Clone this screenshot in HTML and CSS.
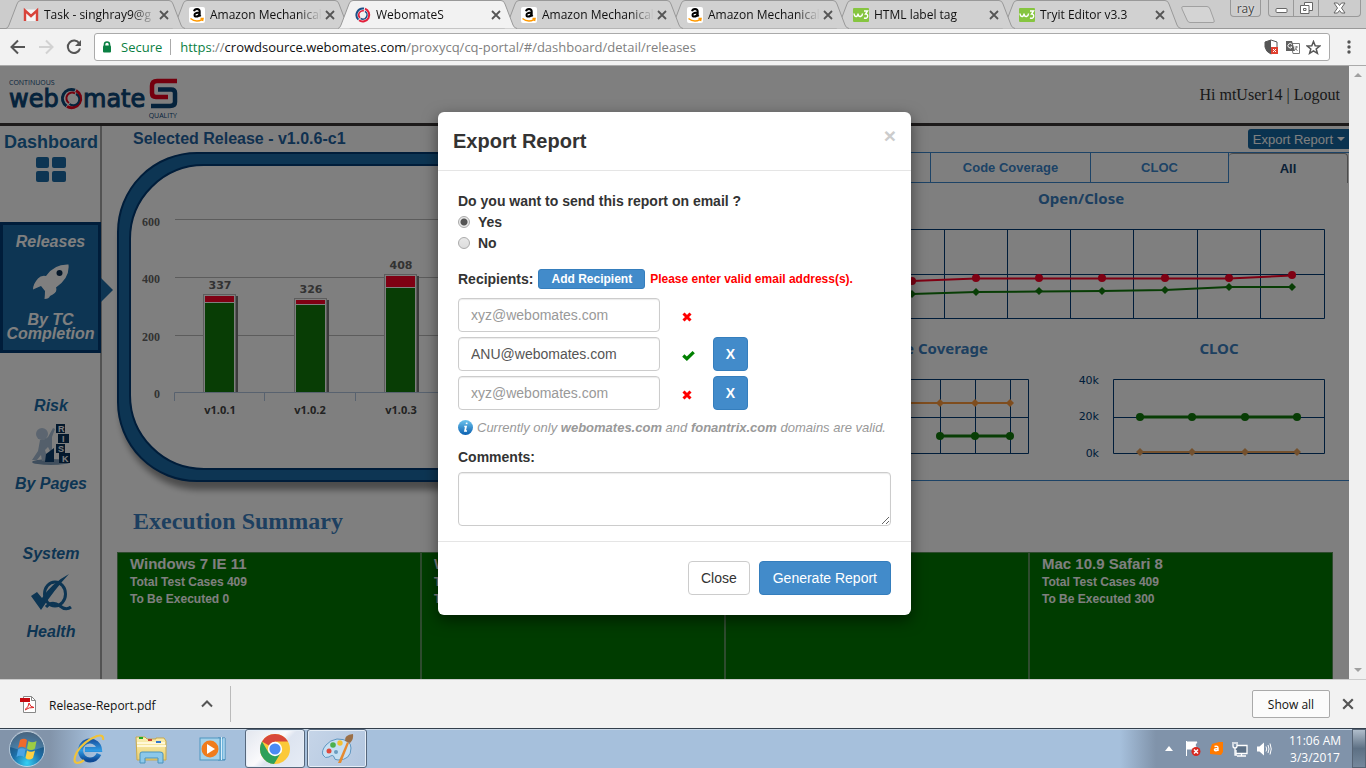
FILE: index.html
```html
<!DOCTYPE html>
<html lang="en">
<head>
<meta charset="utf-8">
<title>WebomateS</title>
<link rel="stylesheet" href="styles.css">
</head>
<body>
<svg class="defs" aria-hidden="true">
  <defs>
    <linearGradient id="gInfo" x1="0" y1="0" x2="0" y2="1"><stop offset="0" stop-color="#6cc4ee"/><stop offset="1" stop-color="#0a5fb0"/></linearGradient>
    <radialGradient id="gOrb" cx=".5" cy=".9" r=".9"><stop offset="0" stop-color="#35d0f5"/><stop offset=".45" stop-color="#1d6fa8"/><stop offset="1" stop-color="#20405f"/></radialGradient>
    <linearGradient id="gIe" x1="0" y1="0" x2="0" y2="1"><stop offset="0" stop-color="#1c5ba8"/><stop offset=".5" stop-color="#2f9be4"/><stop offset="1" stop-color="#0e4a96"/></linearGradient>
    <linearGradient id="gFolder" x1="0" y1="0" x2="0" y2="1"><stop offset="0" stop-color="#fbf0b4"/><stop offset="1" stop-color="#e9cf70"/></linearGradient>
    <symbol id="tabShape" viewBox="0 0 179 29" preserveAspectRatio="none"><path d="M0 28.500 Q2 28 3 25 L11 4 Q12 .5 15 .5 H163 Q166 .5 167 4 L175 25 Q176 28 179 28.500" stroke-width="1"/></symbol>
    <symbol id="x" viewBox="0 0 10 10"><path d="M1 1L9 9M9 1L1 9" stroke="#555" stroke-width="1.800" fill="none"/></symbol>
    <symbol id="amazon" viewBox="0 0 16 16"><rect width="16" height="16" rx="2" fill="#fff"/><path d="M5 4.300Q5.500 2 8 2Q10.700 2 10.700 4.500V8.200L11.500 9.500M10.600 5.500Q5.500 5.500 5.500 8Q5.500 9.600 7.300 9.600Q9.500 9.600 10.600 7" fill="none" stroke="#000" stroke-width="2"/><path d="M1.500 11.500Q7 16 13 12.600M11.500 11.600L14 11.500L13.500 14" fill="none" stroke="#f90" stroke-width="1.500"/></symbol>
    <symbol id="w3" viewBox="0 0 16 14"><rect width="16" height="14" rx="1" fill="#86c540"/><path d="M1 5.500Q1.500 9 3.500 8.500Q5 8 5 5.500Q5.500 9 7.500 8.500Q9.500 8 9.500 5.500M11 3H14.500L12.500 6Q15 6 14.600 8.600Q14 11 11 10" fill="none" stroke="#fff" stroke-width="1.400"/></symbol>
    <symbol id="swirl" viewBox="0 0 16 16"><path d="M3.400 12.600A6.500 6.500 0 0 1 9 1.600" fill="none" stroke="#1c4f86" stroke-width="2"/><path d="M10 1.800A6.500 6.500 0 1 1 4 13.200" fill="none" stroke="#e2203c" stroke-width="2"/><path d="M5 11A4.200 4.200 0 0 1 9 3.900" fill="none" stroke="#e2203c" stroke-width="1.500"/><path d="M10 4.300A4.200 4.200 0 1 1 5.600 11.500" fill="none" stroke="#1c4f86" stroke-width="1.500"/></symbol>
    <symbol id="bad" viewBox="0 0 10 10"><path d="M1.500 1.500L8.500 8.500M8.500 1.500L1.500 8.500" stroke="red" stroke-width="3" fill="none"/></symbol>
    <symbol id="good" viewBox="0 0 12 10"><path d="M1.200 5L4.500 8L10.800 1.800" stroke="green" stroke-width="3" fill="none"/></symbol>
  </defs>
</svg>

<div class="tabstrip">
  <div class="tab t1"><svg class="shape"><use href="#tabShape"/></svg>
    <svg class="fav" viewBox="0 0 16 16"><path d="M1 2.500H15V14H1Z" fill="#f4f4f4"/><path d="M2 14V3.500L8 9L14 3.500V14" fill="none" stroke="#d8433a" stroke-width="2.400"/></svg>
    <span class="tab-title">Task - singhray9@g</span><button class="tab-x" aria-label="Close tab"><svg><use href="#x"/></svg></button></div>
  <div class="tab t2"><svg class="shape"><use href="#tabShape"/></svg><svg class="fav"><use href="#amazon"/></svg><span class="tab-title">Amazon Mechanical</span><button class="tab-x" aria-label="Close tab"><svg><use href="#x"/></svg></button></div>
  <div class="tab active"><svg class="shape"><use href="#tabShape"/></svg><svg class="fav"><use href="#swirl"/></svg><span class="tab-title">WebomateS</span><button class="tab-x" aria-label="Close tab"><svg><use href="#x"/></svg></button></div>
  <div class="tab t4"><svg class="shape"><use href="#tabShape"/></svg><svg class="fav"><use href="#amazon"/></svg><span class="tab-title">Amazon Mechanical</span><button class="tab-x" aria-label="Close tab"><svg><use href="#x"/></svg></button></div>
  <div class="tab t5"><svg class="shape"><use href="#tabShape"/></svg><svg class="fav"><use href="#amazon"/></svg><span class="tab-title">Amazon Mechanical</span><button class="tab-x" aria-label="Close tab"><svg><use href="#x"/></svg></button></div>
  <div class="tab t6"><svg class="shape"><use href="#tabShape"/></svg><svg class="fav"><use href="#w3"/></svg><span class="tab-title">HTML label tag</span><button class="tab-x" aria-label="Close tab"><svg><use href="#x"/></svg></button></div>
  <div class="tab t7"><svg class="shape"><use href="#tabShape"/></svg><svg class="fav"><use href="#w3"/></svg><span class="tab-title">Tryit Editor v3.3</span><button class="tab-x" aria-label="Close tab"><svg><use href="#x"/></svg></button></div>
  <button class="newtab" aria-label="New tab"><svg width="34" height="18" viewBox="0 0 34 18"><path d="M2 .5H26Q28 .5 29 3L33 14Q34 16.500 32 16.500H9Q7 16.500 6 14L1 3Q0 .5 2 .5Z" fill="#d4d4d4" stroke="#a0a0a0"/></svg></button>
  <div class="winctl">
    <button class="user">ray</button>
    <div class="wingroup">
      <button aria-label="Minimize"><svg width="13" height="14" viewBox="0 0 13 14"><rect x="1" y="7.500" width="11" height="4" rx="1" fill="#fff" stroke="#666"/></svg></button>
      <button aria-label="Restore"><svg width="13" height="14" viewBox="0 0 13 14"><path d="M4.500 1.500H12.500V9.500H9V12.500H.5V4.500H4.500Z" fill="#fff" stroke="#666"/><path d="M4.500 4.500H9V9.500M3.500 7.500H6V9.500H3.500Z" fill="none" stroke="#666"/></svg></button>
      <button class="wide" aria-label="Close"><svg width="13" height="12" viewBox="0 0 13 12"><path d="M1 1H4.500L6.500 3.500L8.500 1H12L8.500 6L12 11H8.500L6.500 8.500L4.500 11H1L4.500 6Z" fill="#fff" stroke="#666"/></svg></button>
    </div>
  </div>
</div>

<div class="toolbar">
  <button class="nav" aria-label="Back"><svg width="16" height="16" viewBox="0 0 16 16"><path d="M15 8H2M8 1.500L1.500 8L8 14.500" fill="none" stroke="#555" stroke-width="2"/></svg></button>
  <button class="nav" aria-label="Forward"><svg width="16" height="16" viewBox="0 0 16 16"><path d="M1 8H14M8 1.500L14.500 8L8 14.500" fill="none" stroke="#d2d2d2" stroke-width="2"/></svg></button>
  <button class="nav" aria-label="Reload"><svg width="16" height="16" viewBox="0 0 16 16"><path d="M13.300 4.500A6.200 6.200 0 1 0 14 9.500" fill="none" stroke="#555" stroke-width="2"/><path d="M15 1V7H9Z" fill="#555"/></svg></button>
  <div class="omnibox">
    <svg width="10" height="12" viewBox="0 0 10 12"><path d="M2.500 5V3.500A2.500 2.500 0 0 1 7.500 3.500V5" fill="none" stroke="#0b8043" stroke-width="1.600"/><rect x="1" y="4.500" width="8" height="7" rx="1" fill="#0b8043"/></svg>
    <span class="secure">Secure</span>
    <span class="url"><span class="scheme">https</span>://<b>crowdsource.webomates.com</b>/proxycq/cq-portal/#/dashboard/detail/releases</span>
    <span class="omni-icons">
      <svg width="15" height="16" viewBox="0 0 15 16"><path d="M7 1L13 3V8Q12 13 7 15Q2 13 1 8V3Z" fill="#fff" stroke="#555"/><path d="M7 1V15Q2 13 1 8V3Z" fill="#555"/><rect x="7" y="8" width="7" height="7" fill="#e0402f"/><path d="M9 10L12 13M12 10L9 13" stroke="#fff"/></svg>
      <svg width="15" height="15" viewBox="0 0 15 15"><path d="M6 3.500H14.500V13.500H8Z" fill="#fff" stroke="#777"/><path d="M1 1H7L10 11H1Z" fill="#606060"/><path d="M7 4.500A2.200 2.200 0 1 0 7 7H5.500" fill="none" stroke="#fff"/><path d="M9.500 7H13M11.500 6V7Q11 9 10 10M10.500 8L12.500 11" fill="none" stroke="#888"/></svg>
      <svg width="15" height="15" viewBox="0 0 15 15"><path d="M7.500 1.500L9.200 5.700L13.700 6L10.200 8.900L11.400 13.300L7.500 10.800L3.600 13.300L4.800 8.900L1.300 6L5.800 5.700Z" fill="none" stroke="#555" stroke-width="1.500"/></svg>
    </span>
  </div>
  <button class="menu" aria-label="Menu"><svg width="4" height="14" viewBox="0 0 4 14" fill="#555"><circle cx="2" cy="2" r="1.700"/><circle cx="2" cy="7" r="1.700"/><circle cx="2" cy="12" r="1.700"/></svg></button>
</div>

<div class="viewport">
<div class="page">
  <header class="site-head">
    <svg class="logo" width="172" height="46" viewBox="0 0 172 46">
      <text x="1" y="10" class="lg-small">CONTINUOUS</text>
      <text x="1" y="32" class="lg-word">web</text>
      <text x="75" y="32" class="lg-word">mate</text>
      <circle cx="65" cy="24" r="10" fill="#fff"/>
      <path d="M58.500 31A9 9 0 0 1 67 15.200" fill="none" stroke="#0b4678" stroke-width="3"/>
      <path d="M68 15.500A9 9 0 1 1 59 31.500" fill="none" stroke="#e8001c" stroke-width="3"/>
      <path d="M61 28A5.500 5.500 0 0 1 67 18.500" fill="none" stroke="#e8001c" stroke-width="2"/>
      <path d="M68 19A6 6 0 1 1 61.500 29" fill="none" stroke="#0b4678" stroke-width="2"/>
      <path d="M169 6H149Q144 6 144 11V18Q144 22 148 22H160" fill="none" stroke="#e8001c" stroke-width="4.500"/>
      <path d="M150 14.500H163Q167 14.500 167 18V27Q167 31 162 31H143" fill="none" stroke="#0b4678" stroke-width="4.500"/>
      <text x="169" y="43" text-anchor="end" class="lg-small">QUALITY</text>
    </svg>
    <div class="account"><span>Hi mtUser14</span> | <a href="#">Logout</a></div>
  </header>
  <div class="columns">
    <nav class="side">
      <a class="s-item s-dash" href="#">Dashboard
        <svg width="30" height="25" viewBox="0 0 30 25" fill="#1a6aa6"><rect width="13" height="11" rx="2"/><rect x="16" width="14" height="11" rx="2"/><rect y="14" width="13" height="11" rx="2"/><rect x="16" y="14" width="14" height="11" rx="2"/></svg></a>
      <a class="s-item s-rel" href="#"><span>Releases</span>
        <svg width="36" height="36" viewBox="0 0 36 36"><path d="M35.500 .5Q37 14 23 23.500Q25 29 17 32Q16 35 11.500 35Q12 30 12 27L8 22Q5 23 0 25.500Q0 20 5 14.500Q8 11 13 12Q21 0 35.500 .5Z" fill="#fff"/><circle cx="26.500" cy="9" r="3" fill="#0a2f52"/></svg>
        <span class="tight">By TC Completion</span></a>
      <a class="s-item s-risk" href="#"><span>Risk</span>
        <svg width="40" height="44" viewBox="0 0 40 44"><ellipse cx="20" cy="39" rx="19" ry="3" fill="#7f9dba"/><circle cx="11" cy="11" r="6" fill="#b8cbe0"/><path d="M9 17Q14 17 17 14L22 5L24 6L21 14V32L17 24L14 27L17 37L11 38L10 32L6 37H1L7 28Z" fill="#a9bfd6"/><path d="M15 31L23 25V39H14Z" fill="#0b3c6c"/><rect x="25" y="1" width="9" height="9" fill="#083058"/><rect x="27" y="11" width="11" height="9" fill="#083058"/><rect x="25" y="21" width="9" height="9" fill="#083058"/><rect x="28" y="30" width="11" height="10" fill="#083058"/><g class="blk"><text x="27" y="9">R</text><text x="31" y="19">I</text><text x="27" y="29">S</text><text x="31" y="39">K</text></g></svg>
        <span>By Pages</span></a>
      <a class="s-item s-sys" href="#"><span>System</span>
        <svg width="42" height="38" viewBox="0 0 42 38"><path d="M39 0Q24 16 11 36L1 22L7 18L12 24Q22 9 39 0Z" fill="#1a6aa6"/><ellipse cx="25" cy="20" rx="10.500" ry="12" fill="none" stroke="#1a6aa6" stroke-width="3"/><path d="M16 33Q22 26 30 32Q36 37 41 33" fill="none" stroke="#1a6aa6" stroke-width="3"/></svg>
        <span>Health</span></a>
    </nav>
    <main>
      <div class="release-bar"><h2>Selected Release - v1.0.6-c1</h2><button class="export">Export Report<i class="caret"></i></button></div>
      <div class="panels">
        <section class="frame"><div class="frame-in">
          <svg class="chart" width="300" height="290">
            <g stroke="#b8b8b8"><path d="M44 53.500H600M44 111.500H600M44 169.500H600"/></g>
            <g class="ylab"><text x="29" y="60">600</text><text x="29" y="117">400</text><text x="29" y="175">200</text><text x="29" y="232">0</text></g>
            <g fill="#777"><rect x="104" y="130" width="3" height="96"/><rect x="195" y="134" width="3" height="92"/><rect x="285" y="110" width="3" height="116"/></g>
            <g fill="#fff" stroke="#bbb"><rect x="72.500" y="128.500" width="32" height="98"/><rect x="163.500" y="132.500" width="32" height="94"/><rect x="253.500" y="108.500" width="32" height="118"/></g>
            <g fill="#ff0026"><rect x="74" y="130" width="29" height="6"/><rect x="165" y="134" width="29" height="4"/><rect x="255" y="110" width="29" height="11"/></g>
            <g fill="#107a0a"><rect x="74" y="137" width="29" height="89"/><rect x="165" y="139" width="29" height="87"/><rect x="255" y="122" width="29" height="104"/></g>
            <path d="M43.500 235V226.500H600M133.500 226V235M224.500 226V235" fill="none" stroke="#b0c4de"/>
            <g class="vlab"><text x="89" y="123">337</text><text x="180" y="127">326</text><text x="270" y="103">408</text></g>
            <g class="xlab"><text x="89" y="248">v1.0.1</text><text x="179" y="248">v1.0.2</text><text x="270" y="248">v1.0.3</text></g>
          </svg>
        </div></section>
        <section class="metrics">
          <div class="mtabs"><button class="grow">Defects</button><button class="cov">Code Coverage</button><button class="cloc">CLOC</button><button class="all">All</button></div>
          <svg class="chart" width="536" height="150">
            <text class="ctitle" x="268" y="21">Open/Close</text>
            <path d="M4.500 46.500H511.500V135.500H4.500ZM4 91.500H511M67.500 46V135M131.500 46V135M194.500 46V135M257.500 46V135M320.500 46V135M384.500 46V135M447.500 46V135" fill="none" stroke="#003a74"/>
            <path d="M36 100L99 98L163 95.500H416L479 92.500" fill="none" stroke="#ff0026" stroke-width="2"/>
            <g fill="#ff0026"><circle cx="99" cy="98" r="4"/><circle cx="163" cy="95" r="4"/><circle cx="226" cy="95" r="4"/><circle cx="289" cy="95" r="4"/><circle cx="352" cy="95" r="4"/><circle cx="416" cy="95" r="4"/><circle cx="479" cy="92" r="4"/></g>
            <path d="M36 112L99 111L163 109L226 108.500L289 108L352 107L416 104H479" fill="none" stroke="#107a0a" stroke-width="2"/>
            <path d="M99 107l4 4l-4 4l-4-4zM163 105l4 4l-4 4l-4-4zM226 104l4 4l-4 4l-4-4zM289 104l4 4l-4 4l-4-4zM352 103l4 4l-4 4l-4-4zM416 100l4 4l-4 4l-4-4zM479 100l4 4l-4 4l-4-4z" fill="#107a0a"/>
          </svg>
          <div class="pair">
            <svg class="chart" width="268" height="147">
              <text class="ctitle" x="175" y="21">Code Coverage</text>
              <path d="M20.500 46.500H215.500V120.500H20.500ZM20 84.500H215M127.500 46V120M162.500 46V120M197.500 46V120" fill="none" stroke="#003a74"/>
              <path d="M20 70H197" stroke="#ff9a3c" stroke-width="2"/><path d="M127 66l4 4l-4 4l-4-4zM162 66l4 4l-4 4l-4-4zM197 66l4 4l-4 4l-4-4z" fill="#ff9a3c"/>
              <path d="M127 103H197" stroke="#107a0a" stroke-width="3"/><g fill="#107a0a"><circle cx="127" cy="103" r="4"/><circle cx="162" cy="103" r="4"/><circle cx="197" cy="103" r="4"/></g>
            </svg>
            <svg class="chart" width="268" height="147">
              <text class="ctitle" x="138" y="21">CLOC</text>
              <g class="klab"><text x="18" y="51">40k</text><text x="18" y="87">20k</text><text x="18" y="124">0k</text></g>
              <path d="M32.500 46.500H243.500V120.500H32.500ZM32 84.500H243" fill="none" stroke="#003a74"/>
              <path d="M59 84H216" stroke="#107a0a" stroke-width="3"/><g fill="#107a0a"><circle cx="59" cy="84" r="4"/><circle cx="111" cy="84" r="4"/><circle cx="164" cy="84" r="4"/><circle cx="216" cy="84" r="4"/></g>
              <path d="M59 119H216" stroke="#e8a25c" stroke-width="2"/><path d="M59 115l4 4l-4 4l-4-4zM111 115l4 4l-4 4l-4-4zM164 115l4 4l-4 4l-4-4zM216 115l4 4l-4 4l-4-4z" fill="#e8a25c"/>
            </svg>
          </div>
        </section>
      </div>
      <h1>Execution Summary</h1>
      <div class="cards">
        <article><h3>Windows 7 IE 11</h3><p>Total Test Cases 409</p><p>To Be Executed 0</p></article>
        <article><h3>Windows 8</h3><p>Total Test Cases 409</p><p>To Be Executed</p></article>
        <article></article>
        <article><h3>Mac 10.9 Safari 8</h3><p>Total Test Cases 409</p><p>To Be Executed 300</p></article>
      </div>
    </main>
  </div>

  <div class="backdrop">
    <form class="modal" role="dialog" aria-labelledby="mt">
      <div class="m-head"><h4 id="mt">Export Report</h4><button type="button" class="m-x" aria-label="Dismiss">×</button></div>
      <div class="m-body">
        <div class="lbl">Do you want to send this report on email ?</div>
        <label class="radio"><input type="radio" name="mail" checked>Yes</label>
        <label class="radio"><input type="radio" name="mail">No</label>
        <div class="recips"><span class="lbl">Recipients:</span><button type="button" class="btn add">Add Recipient</button><span class="err">Please enter valid email address(s).</span></div>
        <div class="row"><input type="text" aria-label="Recipient 1" placeholder="xyz@webomates.com"><span class="st"><svg><use href="#bad"/></svg></span></div>
        <div class="row"><input type="text" aria-label="Recipient 2" value="ANU@webomates.com"><span class="st"><svg class="ok"><use href="#good"/></svg></span><button type="button" class="btn del">X</button></div>
        <div class="row"><input type="text" aria-label="Recipient 3" placeholder="xyz@webomates.com"><span class="st"><svg><use href="#bad"/></svg></span><button type="button" class="btn del">X</button></div>
        <div class="hint"><svg width="15" height="15" viewBox="0 0 15 15"><circle cx="7.500" cy="7.500" r="7.500" fill="url(#gInfo)"/><path d="M8.800 2.600L8.500 4.200M6.300 6.500H8L7 11H9" fill="none" stroke="#fff" stroke-width="1.700"/></svg><span>Currently only <b>webomates.com</b> and <b>fonantrix.com</b> domains are valid.</span></div>
        <label class="lbl" for="cm">Comments:</label>
        <textarea id="cm"></textarea>
      </div>
      <div class="m-foot"><button type="button" class="btn plain">Close</button><button type="button" class="btn gen">Generate Report</button></div>
    </form>
  </div>
</div>
<div class="scroll"><i class="up"></i><i class="down"></i></div>
</div>

<div class="shelf">
  <button class="dl">
    <svg width="16" height="17" viewBox="0 0 16 17"><path d="M3.500 .5H11.500L15.500 4.500V16.500H3.500Z" fill="#fff" stroke="#888"/><path d="M11.500 .5V4.500H15.500" fill="none" stroke="#888"/><rect y="2" width="10" height="4" fill="#c8090f"/><path d="M5 13.500Q9 11 9 7Q10 11 14 11.500Q9 11 5 14" fill="none" stroke="#d22"/></svg>
    <span class="dl-name">Release-Report.pdf</span>
    <svg class="chev" width="12" height="8" viewBox="0 0 12 8"><path d="M1 6.500L6 1.500L11 6.500" fill="none" stroke="#555" stroke-width="2"/></svg>
  </button>
  <button class="showall">Show all</button>
  <button class="shelf-x" aria-label="Close downloads bar"><svg><use href="#x"/></svg></button>
</div>

<div class="taskbar">
  <button class="start" aria-label="Start"><svg width="38" height="38" viewBox="0 0 38 38"><circle cx="19" cy="19" r="17.500" fill="url(#gOrb)" stroke="#dbe9f5" stroke-opacity=".7"/><path d="M2 17A17 17 0 0 1 36 17Q19 24 2 17Z" fill="#fff" opacity=".18"/><path d="M12 10Q16 7.500 19 10L17.500 18Q14 15.500 10 18Z" fill="#ee6a2c"/><path d="M20.500 11Q24 13.500 28.500 11L27 18.500Q23 21.500 19 18.500Z" fill="#9ccc44"/><path d="M10 19.500Q14 17 17.500 19.500L16 27Q12 24.500 8.500 27Z" fill="#4ba4e6"/><path d="M19 20.500Q23 23 27 20.500L25 28Q21 31 17.500 28Z" fill="#fcd042"/></svg></button>
  <button class="tk" aria-label="Internet Explorer"><svg width="34" height="32" viewBox="0 0 34 32"><path d="M27 21Q24 27 18 27A9.500 9.500 0 1 1 27.500 16.500H13" fill="none" stroke="url(#gIe)" stroke-width="5"/><path d="M31 7Q32 1 25 3Q12 8 5 19Q0 29 5 30Q9 30 12 27" fill="none" stroke="#f0c33a" stroke-width="2.200"/></svg></button>
  <button class="tk" aria-label="Explorer"><svg width="34" height="30" viewBox="0 0 34 30"><path d="M2 3H11L13 5H22V4H30L32 7V26H3Z" fill="url(#gFolder)" stroke="#c9a94c"/><path d="M3 9H31M3 12H32" stroke="#fff8d8" stroke-width="2"/><rect x="5" y="3" width="4" height="2" fill="#2a2"/><rect x="14" y="5" width="4" height="2" fill="#c43"/><rect x="22" y="7" width="5" height="2" fill="#37c"/><path d="M6 29V20Q6 18 8 18H26Q29 18 29 20V29H24V24H11V29Z" fill="#8cc8ea" stroke="#4a93bd"/></svg></button>
  <button class="tk" aria-label="Media Player"><svg width="34" height="28" viewBox="0 0 34 28"><path d="M22 3H29V25H22Z" fill="#70b4dc" stroke="#3d87b5"/><path d="M25.500 2V25M28 3V24" stroke="#d8effb"/><rect x="4" y="3" width="20" height="22" fill="#a5d2ea" stroke="#4f96bf"/><circle cx="14" cy="14" r="8.500" fill="#f07c1c"/><path d="M11 9L19 14L11 19Z" fill="#fff"/></svg></button>
  <button class="tk on lit" aria-label="Chrome"><svg width="32" height="32" viewBox="0 0 32 32"><circle cx="16" cy="16" r="15" fill="#fbc938"/><path d="M16 16L3 8.500A15 15 0 0 1 29 8.500H16Z" fill="#d8473a"/><path d="M3 8.500A15 15 0 0 0 15 31L22 19.500L9.500 19.500Z" fill="#2da05a"/><circle cx="16" cy="16" r="7.200" fill="#fff"/><circle cx="16" cy="16" r="5.600" fill="#4a8af4"/></svg></button>
  <button class="tk on" aria-label="Paint"><svg width="34" height="32" viewBox="0 0 34 32"><path d="M17 6Q31 6 31 15Q31 27 18 27Q14 27 14 24Q13 21 9 24Q5 26 3 22Q1 18 6 12Q10 7 17 6Z" fill="#c6e0f3" stroke="#5e96c0"/><circle cx="9" cy="18" r="2.500" fill="#e04a3c"/><circle cx="13" cy="12" r="2.800" fill="#4cb04c"/><circle cx="20" cy="10" r="2.700" fill="#f2c034"/><circle cx="16" cy="19" r="2" fill="#6b9cc0"/><path d="M18 30L27 9L29 10L21 30Z" fill="#e58a30"/><path d="M25 8Q24 2 33 1Q34 6 30 10Z" fill="#9b7048"/></svg></button>
  <div class="tray">
    <div class="tray-icons">
    <svg width="8" height="5" viewBox="0 0 8 5"><path d="M0 5L4 0L8 5Z" fill="#fff"/></svg>
    <svg width="16" height="17" viewBox="0 0 16 17"><path d="M1.500 1V16M2 2H12L10 5L12 9H2Z" fill="#fff" stroke="#fff"/><circle cx="11" cy="11.500" r="4.500" fill="#d8281f"/><path d="M9 9.500L13 13.500M13 9.500L9 13.500" stroke="#fff" stroke-width="1.500"/></svg>
    <svg width="15" height="15" viewBox="0 0 15 15"><path d="M3 3L10 1L14 1V11L12 14L1 13V9Z" fill="#ff7a00"/><path d="M5.500 5.500Q9 4.500 9 7V10M9 7.500Q5 7.500 5.500 9Q6.500 10.500 9 9" fill="none" stroke="#fff" stroke-width="1.400"/></svg>
    <svg width="16" height="16" viewBox="0 0 16 16"><path d="M5 4.500H15V12.500H4V9" fill="#5d7187" stroke="#fff" stroke-width="1.300"/><path d="M5 15H14M9.500 12V15M3 7V14H5M1 1V5Q1 7 3 7Q5 7 5 5V1M3 1V3" fill="none" stroke="#fff" stroke-width="1.300"/></svg>
    <svg width="16" height="16" viewBox="0 0 16 16"><path d="M1 5.500H3.500L8 1.500V14.500L3.500 10.500H1Z" fill="#fff"/><path d="M10 5.500Q11.500 8 10 10.500M12 4Q14 8 12 12M14 2.500Q16.500 8 14 13.500" fill="none" stroke="#fff"/></svg>
    </div>
    <div class="clock">11:06 AM<br>3/3/2017</div>
    <button class="peek" aria-label="Show desktop"></button>
  </div>
</div>
</body>
</html>
```

FILE: styles.css
```css
* { box-sizing: border-box; }
body { margin: 0; height: 100vh; display: flex; flex-direction: column; overflow: hidden; font-family: "Liberation Sans", Arial, sans-serif; font-size: 14px; color: #333; }
button { font: inherit; border: 0; background: none; padding: 0; margin: 0; color: inherit; }
h1, h2, h3, h4, p { margin: 0; }
svg { flex: none; }
.defs { width: 0; height: 0; position: absolute; }

/* Tab strip */
.tabstrip { flex: none; display: flex; height: 29px; padding-left: 6px; background: #ccc; border-bottom: 1px solid #999; font: 12px/18px "Open Sans", sans-serif; color: #111; }
.tab { position: relative; width: 179px; height: 29px; margin-right: -13px; padding: 0 16px 0 17px; display: flex; align-items: center; }
.shape { position: absolute; inset: 0; width: 100%; height: 100%; fill: #d1d1d1; stroke: #999; }
.active .shape { fill: #f2f2f2; }
.t1 { z-index: 6; } .t2 { z-index: 5; } .active { z-index: 9; } .t4 { z-index: 4; } .t5 { z-index: 3; } .t6 { z-index: 2; } .t7 { z-index: 1; }
.fav { position: relative; width: 16px; height: 16px; margin-right: 5px; }
.tab-title { position: relative; flex: 1; min-width: 0; white-space: nowrap; -webkit-mask-image: linear-gradient(to right, #000 88px, transparent 112px); mask-image: linear-gradient(to right, #000 88px, transparent 112px); }
.tab-x { position: relative; display: flex; }
.tab-x svg { width: 10px; height: 10px; }
.newtab { margin: 6px 0 0 13px; height: 18px; display: flex; }
.winctl { margin-left: auto; display: flex; align-items: flex-start; gap: 7px; padding-right: 5px; }
.user { width: 31px; height: 17px; border: 1px solid #999; border-top: 0; border-radius: 0 0 4px 4px; line-height: 15px; color: #444; text-shadow: 0 0 2px #fff; }
.wingroup { display: flex; border: 1px solid #999; border-top: 0; border-radius: 0 0 4px 4px; }
.wingroup button { width: 25px; height: 16px; display: flex; align-items: center; justify-content: center; border-right: 1px solid #999; }
.wingroup .wide { width: 41px; border-right: 0; }

/* Address bar */
.toolbar { flex: none; height: 37px; display: flex; align-items: center; padding: 0 15px 0 10px; gap: 12px; background: #f2f2f2; border-bottom: 1px solid #aaa; }
.nav { display: flex; width: 16px; }
.omnibox { flex: 1; height: 28px; display: flex; align-items: center; padding: 0 8px 0 7px; background: #fff; border: 1px solid #aaa; border-radius: 3px; font: 13px/20px "Open Sans", sans-serif; color: #808080; }
.secure { margin-left: 9px; padding-right: 8px; line-height: 16px; border-right: 1px solid #aaa; color: #0b8043; }
.url { margin-left: 9px; }
.url b { font-weight: 400; color: #111; }
.scheme { color: #0b8043; }
.omni-icons { margin-left: auto; display: flex; align-items: center; gap: 6px; }
.menu { display: flex; margin-left: 5px; }

/* Portal */
.viewport { flex: 1; min-height: 0; display: flex; }
.page { position: relative; flex: 1; min-width: 0; overflow: hidden; background: #fff; }
.scroll { flex: none; width: 17px; background: #f0f0f0; display: flex; flex-direction: column; justify-content: space-between; align-items: center; padding: 7px 0; }
.up, .down { border: 4px solid transparent; }
.up { border-top: 0; border-bottom-color: #a0a0a0; }
.down { border-bottom: 0; border-top-color: #a0a0a0; }
.site-head { height: 60px; display: flex; align-items: center; justify-content: space-between; padding: 0 9px 0 8px; border-bottom: 3px solid #383434; }
.logo { margin-top: 6px; }
.lg-small { font: 7px "Open Sans", sans-serif; fill: #0b4678; }
.lg-word { font: 24px "DejaVu Sans", sans-serif; fill: #0b4678; stroke: #0b4678; stroke-width: 1; }
.account { font: 16px "Liberation Serif", serif; color: #333; }
.account a { color: inherit; text-decoration: none; }
.columns { display: flex; height: 700px; }
.side { flex: none; width: 102px; border-right: 2px solid #a4a4a4; font-style: italic; }
.s-item { display: flex; flex-direction: column; align-items: center; padding-left: 2px; color: #1a6aa6; font-size: 16px; line-height: 18px; font-weight: bold; text-decoration: none; text-align: center; }
.s-dash { height: 96px; padding-top: 7px; gap: 6px; font-size: 18px; font-style: normal; }
.s-rel { position: relative; width: 101px; height: 131px; padding-top: 8px; padding-left: 0; background: #1a6aa6; border: 3px solid #003a74; color: #fff; }
.s-rel svg { margin: 13px 0; }
.s-rel::after { content: ""; position: absolute; left: 98px; top: 53px; border: 12px solid transparent; border-right: 0; border-left-color: #1a6aa6; }
.tight { line-height: 14px; }
.s-risk { padding-top: 44px; gap: 8px; }
.s-sys { padding-top: 52px; gap: 11px; }
.blk { font: bold 9px "Liberation Sans", sans-serif; fill: #fff; }
main { flex: 1; min-width: 0; padding-left: 15px; }
.release-bar { height: 26px; display: flex; align-items: center; justify-content: space-between; padding-left: 16px; }
.release-bar h2 { font-size: 16px; line-height: 20px; color: #1f62a0; }
.export { display: flex; align-items: center; gap: 4px; height: 20px; padding: 0 4px 0 5px; border-radius: 3px 0 0 3px; background: #1466a0; color: #fff; font-size: 13px; }
.caret { border: 4px solid transparent; border-bottom: 0; border-top-color: #fff; }
.panels { display: flex; gap: 13px; height: 330px; }
.frame { flex: 1; min-width: 0; padding: 10px; background: #1a6aa6; border: 2px solid #003a74; border-radius: 80px; box-shadow: 3px 8px 6px #999; }
.frame-in { height: 100%; background: #fff; border: 2px solid #003a74; border-radius: 75px; overflow: hidden; }
.chart { display: block; overflow: visible; }
.frame .chart { width: 100%; }
.ylab { font: bold 12px "Liberation Serif", serif; fill: #666; text-anchor: end; }
.vlab { font: bold 11px "DejaVu Sans", sans-serif; fill: #666; text-anchor: middle; }
.xlab { font: bold 11px "Open Sans", sans-serif; fill: #444; text-anchor: middle; }
.klab { font: 11px "DejaVu Sans", sans-serif; fill: #003a74; text-anchor: end; }
.ctitle { font: bold 15px "Noto Sans", sans-serif; fill: #3a7fc0; text-anchor: middle; }
.pair .chart:first-child .ctitle { text-anchor: end; }
.metrics { flex: 0 0 536px; height: 329px; border-bottom: 1px solid #3a86cc; }
.mtabs { display: flex; height: 31px; border-top: 1px solid #3a86cc; font-size: 13px; font-weight: bold; color: #3a86cc; }
.mtabs button { border-right: 1px solid #3a86cc; border-bottom: 1px solid #3a86cc; }
.mtabs .grow { flex: 1; }
.mtabs .cov { width: 160px; }
.mtabs .cloc { width: 138px; }
.mtabs .all { width: 119px; margin-right: 1px; border: 1px solid #999; border-left: 0; border-bottom: 0; border-radius: 4px 4px 0 0; color: #14406c; }
.pair { display: flex; }
h1 { padding: 25px 16px 17px; font: bold 24px/28px "Liberation Serif", serif; color: #3a7fc0; }
.cards { display: grid; grid-template-columns: repeat(4, 1fr); margin-right: 16px; height: 200px; border: 1px solid #5c965c; background: #5c965c; gap: 2px; }
.cards article { background: #007800; padding: 2px 12px; color: #fff; }
.cards h3 { font-size: 15px; line-height: 18px; }
.cards p { padding-top: 1px; font-size: 12px; font-weight: bold; line-height: 16px; }

/* Dialog */
.backdrop { position: absolute; inset: 0; background: rgba(0, 0, 0, .5); display: flex; justify-content: center; align-items: flex-start; padding-top: 46px; }
.modal { width: 473px; background: #fff; border-radius: 6px; box-shadow: 0 5px 15px rgba(0, 0, 0, .5); }
.m-head { display: flex; justify-content: space-between; height: 59px; padding: 15px; border-bottom: 1px solid #e5e5e5; }
.m-head h4 { font-size: 20px; line-height: 28px; }
.m-x { font-size: 21px; line-height: 18px; height: 18px; font-weight: bold; color: #ccc; }
.m-body { padding: 20px 20px 15px; display: flex; flex-direction: column; }
.lbl { font-weight: bold; line-height: 20px; }
.radio { display: flex; align-items: center; gap: 8px; height: 21px; font-weight: bold; }
.radio input { appearance: none; margin: 0; width: 12px; height: 12px; border: 1px solid #aaa; border-radius: 50%; background: linear-gradient(#e8e8e8, #ddd); }
.radio input:checked { background: radial-gradient(circle, #555 3px, #e8e8e8 4px); }
.recips { display: flex; align-items: center; gap: 5px; margin: 16px 0 9px; height: 20px; }
.btn { height: 34px; padding: 0 12px; border: 1px solid #357ebd; border-radius: 4px; background: #428bca; color: #fff; }
.add { height: 20px; font-size: 12px; font-weight: bold; border-radius: 3px; }
.err { color: red; font-size: 12px; font-weight: bold; }
.row { display: flex; align-items: center; height: 34px; margin-bottom: 5px; }
.row input { width: 202px; height: 34px; padding: 0 12px; border: 1px solid #ccc; border-radius: 4px; box-shadow: inset 0 1px 1px rgba(0, 0, 0, .08); font: inherit; color: #555; }
.row input::placeholder { color: #999; }
.st { display: flex; width: 53px; padding: 3px 0 0 22px; }
.st svg { width: 10px; height: 10px; }
.st .ok { width: 13px; height: 11px; }
.del { width: 35px; padding: 0; font-weight: bold; }
.hint { display: flex; align-items: center; gap: 4px; height: 24px; font-size: 13px; font-style: italic; color: #999; white-space: nowrap; }
.m-body > label.lbl { margin: 8px 0 5px; }
.m-body textarea { width: 100%; height: 54px; border: 1px solid #ccc; border-radius: 4px; box-shadow: inset 0 1px 1px rgba(0, 0, 0, .08); }
.m-foot { display: flex; justify-content: flex-end; gap: 9px; padding: 19px 20px 20px; border-top: 1px solid #e5e5e5; }
.gen { padding: 0 13px; }
.plain { background: #fff; border-color: #ccc; color: #333; }

/* Downloads shelf */
.shelf { flex: none; display: flex; align-items: center; height: 49px; padding-right: 12px; background: #f2f2f2; border-top: 1px solid #ccc; font: 12px "Open Sans", sans-serif; color: #111; }
.dl { display: flex; align-items: center; width: 231px; height: 36px; padding: 0 17px 0 20px; gap: 13px; border-right: 1px solid #bbb; }
.dl-name { padding-top: 3px; }
.chev { margin-left: auto; }
.showall { margin-left: auto; width: 78px; height: 28px; border: 1px solid #aaa; border-radius: 2px; background: #fbfbfb; }
.shelf-x { margin-left: 12px; display: flex; }
.shelf-x svg { width: 12px; height: 12px; }

/* Taskbar */
.taskbar { flex: none; display: flex; align-items: stretch; height: 40px; padding-left: 8px; border-top: 1px solid #333f4c; background: linear-gradient(to right, #8294aa 50px, #a6c0dc 95px, #a6c0dc calc(100% - 246px), #8093aa calc(100% - 210px)); box-shadow: inset 0 1px #c9d8e8; }
.taskbar button { display: flex; align-items: center; justify-content: center; }
.start { width: 38px; margin-right: 13px; }
.tk { width: 60px; margin-right: 2px; }
.on { border: 1px solid #56677c; border-radius: 3px; background: linear-gradient(120deg, #c6d5e8, #b2c6df); box-shadow: inset 0 0 0 1px #e6eef7; }
.lit { background: linear-gradient(135deg, #e2e6ee, #fafafc 45%, #dde4f0 55%, #e6ecf5); }
.tray { margin-left: auto; display: flex; align-items: center; color: #fff; }
.tray-icons { display: flex; align-items: center; gap: 8px; }
.tray-icons svg:first-child { margin-right: 4px; }
.clock { width: 74px; margin-left: 6px; text-align: center; font: 12px/17px "Open Sans", sans-serif; }
.peek { align-self: stretch; width: 14px; border: 1px solid #566475; background: linear-gradient(#b0bdcb, #5d7084 50%, #75889c); }
```
